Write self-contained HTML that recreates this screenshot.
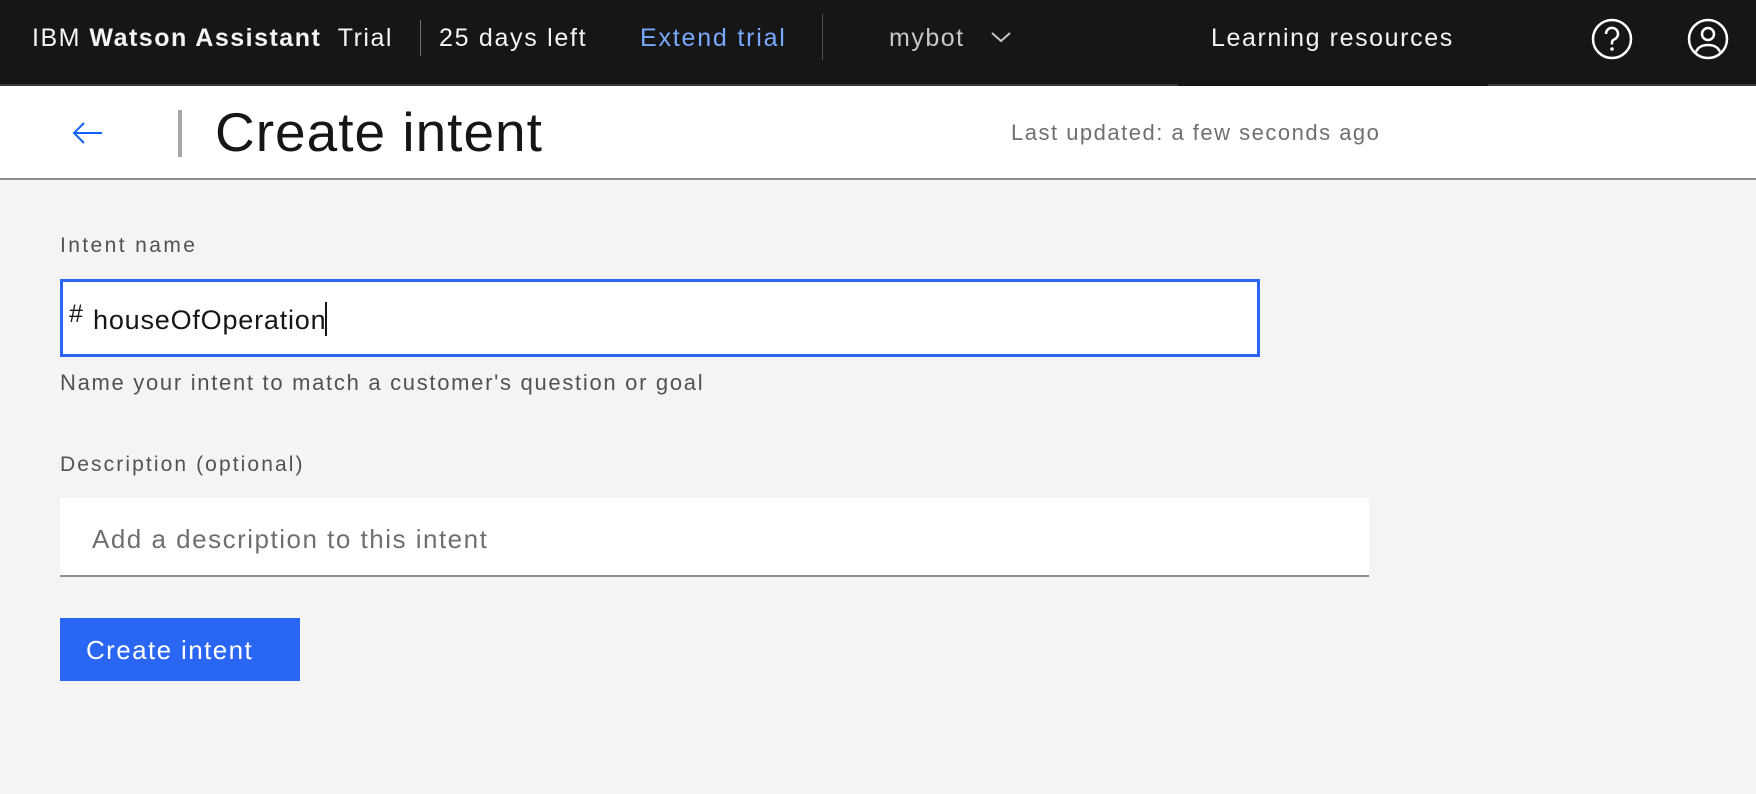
<!DOCTYPE html>
<html><head><style>
*{margin:0;padding:0;box-sizing:border-box}
body{width:1756px;height:794px;background:#f4f4f4;font-family:"Liberation Sans",sans-serif;position:relative;overflow:hidden}
.a{position:absolute;white-space:nowrap}
.top{position:absolute;left:0;top:0;width:1756px;height:84px;background:#161616}
.strip{position:absolute;top:84px;height:2px;background:#393939}
.tb{color:#f4f4f4;font-size:25px;top:24px;letter-spacing:1.5px}
</style></head><body>
<div class="top"></div>
<div class="strip" style="left:0;width:1178px"></div>
<div class="strip" style="left:1178px;width:310px;background:#161616"></div>
<div class="strip" style="left:1488px;width:268px"></div>
<div class="a tb" style="left:32px">IBM <b>Watson Assistant</b>&nbsp; Trial</div>
<div class="a" style="left:420px;top:20px;width:1px;height:36px;background:#6f6f6f"></div>
<div class="a tb" style="left:439px;letter-spacing:1.7px">25 days left</div>
<div class="a tb" style="left:640px;color:#78a9ff;letter-spacing:1.8px">Extend trial</div>
<div class="a" style="left:822px;top:14px;width:1px;height:46px;background:#525252"></div>
<div class="a tb" style="left:889px;color:#c6c6c6">mybot</div>
<svg class="a" style="left:990px;top:30px" width="22" height="14" viewBox="0 0 22 14"><path d="M2 3l9 8 9-8" fill="none" stroke="#c6c6c6" stroke-width="2"/></svg>
<div class="a tb" style="left:1211px;letter-spacing:1.6px">Learning resources</div>
<svg class="a" style="left:1589px;top:16px" width="46" height="46" viewBox="0 0 46 46"><circle cx="23" cy="23" r="19" fill="none" stroke="#fff" stroke-width="2.5"/><path d="M17 18a6 6 0 1 1 8 5.5c-1.5.7-2 1.5-2 3v2" fill="none" stroke="#fff" stroke-width="2.5"/><circle cx="23" cy="33" r="1.8" fill="#fff"/></svg>
<svg class="a" style="left:1685px;top:16px" width="46" height="46" viewBox="0 0 46 46"><circle cx="23" cy="23" r="19" fill="none" stroke="#fff" stroke-width="2.5"/><circle cx="23" cy="18" r="6" fill="none" stroke="#fff" stroke-width="2.5"/><path d="M11 36c2-5 6-7 12-7s10 2 12 7" fill="none" stroke="#fff" stroke-width="2.5"/></svg>
<div class="a" style="left:0;top:86px;width:1756px;height:94px;background:#fff;border-bottom:2px solid #8d8d8d"></div>
<svg class="a" style="left:72px;top:120px" width="32" height="26" viewBox="0 0 32 26"><path d="M30 13H3M12 3L2 13l10 10" fill="none" stroke="#0f62fe" stroke-width="2"/></svg>
<div class="a" style="left:178px;top:110px;width:4px;height:47px;background:#a8a8a8"></div>
<div class="a" style="left:215px;top:100px;font-size:55px;color:#161616;letter-spacing:1px">Create intent</div>
<div class="a" style="left:1011px;top:120px;font-size:22px;color:#6f6f6f;letter-spacing:1.5px">Last updated: a few seconds ago</div>
<div class="a" style="left:60px;top:234px;font-size:21px;color:#525252;letter-spacing:2.4px">Intent name</div>
<div class="a" style="left:60px;top:279px;width:1200px;height:78px;background:#fff;border:3px solid #2a66f4"></div>
<div class="a" style="left:69px;top:300px;font-size:25px;color:#161616">#</div>
<div class="a" style="left:93px;top:302px;font-size:27px;color:#161616;letter-spacing:0.8px">houseOfOperation<span style="display:inline-block;width:2px;height:34px;background:#161616;vertical-align:-7px;margin-left:-1px"></span></div>
<div class="a" style="left:60px;top:370px;font-size:22px;color:#525252;letter-spacing:1.7px">Name your intent to match a customer's question or goal</div>
<div class="a" style="left:60px;top:453px;font-size:21px;color:#525252;letter-spacing:2.1px">Description (optional)</div>
<div class="a" style="left:60px;top:498px;width:1309px;height:79px;background:#fff;border-bottom:2px solid #8d8d8d"></div>
<div class="a" style="left:92px;top:524px;font-size:26px;color:#6f6f6f;letter-spacing:1.5px">Add a description to this intent</div>
<div class="a" style="left:60px;top:618px;width:240px;height:63px;background:#2a66f4"></div>
<div class="a" style="left:86px;top:635px;font-size:26px;color:#fff;letter-spacing:1.4px">Create intent</div>
</body></html>
